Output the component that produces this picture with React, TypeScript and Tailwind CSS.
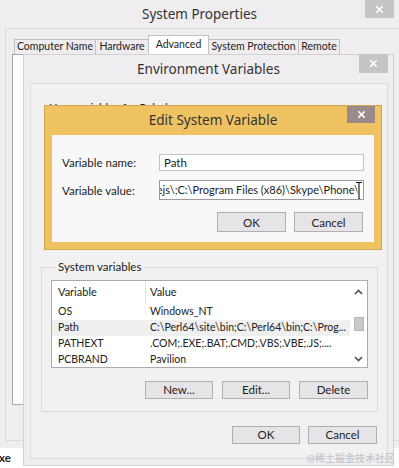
import React from 'react';

// little white "x" used on the caption buttons
const CloseX = () => (
  <svg width="9" height="9" viewBox="0 0 10 10">
    <path d="M1.5 1.5L8.5 8.5M8.5 1.5L1.5 8.5" stroke="white" strokeWidth="1.7" />
  </svg>
);

const Chevron = ({ up }: { up?: boolean }) => (
  <svg width="9" height="6" viewBox="0 0 9 6">
    <path d={up ? 'M1 5L4.5 1.5L8 5' : 'M1 1L4.5 4.5L8 1'} stroke="#505050" strokeWidth="1.6" fill="none" />
  </svg>
);

const IBeam = () => (
  <svg width="8" height="20" viewBox="0 0 8 20">
    <path d="M1 1.5h2.2L4 2.3L4.8 1.5H7M4 2.3V17.7M1 18.5h2.2L4 17.7L4.8 18.5H7" stroke="white" strokeWidth="3" fill="none" />
    <path d="M1 1.5h2.2L4 2.3L4.8 1.5H7M4 2.3V17.7M1 18.5h2.2L4 17.7L4.8 18.5H7" stroke="#111" strokeWidth="1.1" fill="none" />
  </svg>
);

function WinButton({ label, className = '' }: { label: string; className?: string }) {
  return (
    <div className={`flex items-center justify-center border border-[#b1afb1] bg-[#e6e4e6] text-[11.5px] text-[#222] ${className}`}>
      {label}
    </div>
  );
}

const tabs = [
  { label: 'Computer Name', cls: 'w-[82px] h-[15px] bg-[#eeecee]' },
  { label: 'Hardware', cls: 'w-[54px] h-[15px] bg-[#eeecee]' },
  { label: 'Advanced', cls: 'w-[61px] h-[19px] bg-white' },
  { label: 'System Protection', cls: 'w-[91px] h-[15px] bg-[#eeecee]' },
  { label: 'Remote', cls: 'w-[42px] h-[15px] bg-[#eeecee]' },
];

const rows = [
  ['OS', 'Windows_NT'],
  ['Path', 'C:\\Perl64\\site\\bin;C:\\Perl64\\bin;C:\\Prog...'],
  ['PATHEXT', '.COM;.EXE;.BAT;.CMD;.VBS;.VBE;.JS;....'],
  ['PCBRAND', 'Pavilion'],
];

export default function App() {
  return (
    <div className="relative w-[399px] h-[468px] overflow-hidden bg-white text-[#1e1e1e] font-['Lato','Noto_Sans_CJK_SC',sans-serif]">
      {/* System Properties (back window) */}
      <div className="h-[448px] bg-[#efedef] flex flex-col">
        <div className="relative h-[28px] flex items-center justify-center font-['Noto_Sans',sans-serif] text-[13.5px] text-[#333]">
          System Properties
          <div className="absolute right-[5px] top-0 w-[29px] h-[18px] bg-[#c6c4c6] flex items-center justify-center">
            <CloseX />
          </div>
        </div>
        <div className="ml-[5px] h-[413px] border-l border-t border-b border-[#dddbdd]">
          <div className="flex items-end pl-[8px] pt-[6px]">
            {tabs.map((t) => (
              <div
                key={t.label}
                className={`flex items-center justify-center whitespace-nowrap border border-b-0 border-[#c3c1c3] -ml-px first:ml-0 text-[10.5px] text-[#222] ${t.cls}`}
              >
                {t.label}
              </div>
            ))}
          </div>
          <div className="ml-[6px] w-[360px] h-[351px] bg-[#fcfcfc] border border-[#a9a7a9]" />
        </div>
      </div>
      <div className="pt-[1px] text-[11.5px] font-bold -ml-[1px] text-[#222]">xe</div>

      {/* Environment Variables */}
      <div className="absolute left-[23px] top-[54px] w-[371px] h-[412px] bg-[#efedef] border border-[#d3d1d3] flex flex-col">
        <div className="relative h-[28px] shrink-0 flex items-center justify-center font-['Noto_Sans',sans-serif] text-[13.5px] text-[#333]">
          Environment Variables
          <div className="absolute right-[5px] -top-px w-[29px] h-[19px] bg-[#c6c4c6] flex items-center justify-center">
            <CloseX />
          </div>
        </div>
        <div className="ml-[6px] mr-[5px] h-[376px] border border-[#dedcde] bg-[#f2f1f2] flex flex-col">
          <div className="h-[177px] pl-[18px] pt-[15px] text-[11.5px] text-[#222]">User variables for Rahul</div>

          <fieldset className="ml-[10px] mr-[9px] border border-[#dcdadc] px-[9px] pb-[12px]">
            <legend className="ml-[5px] px-[2px] text-[11.5px] leading-[12px] text-[#222]">System variables</legend>
            <div className="mt-[7px] h-[88px] border border-[#acaaac] bg-white flex overflow-hidden">
              <div className="flex-1 flex flex-col text-[10.5px] text-[#222]">
                <div className="h-[23px] shrink-0 flex text-[11px]">
                  <div className="w-[94px] pl-[6px] flex items-center border-r border-[#e3e3e3]">Variable</div>
                  <div className="pl-[4px] flex items-center">Value</div>
                </div>
                {rows.map(([k, v]) => (
                  <div key={k} className={`h-[16px] shrink-0 flex items-center whitespace-nowrap ${k === 'Path' ? 'bg-[#efefef]' : ''}`}>
                    <div className="w-[94px] pl-[6px]">{k}</div>
                    <div className="pl-[4px]">{v}</div>
                  </div>
                ))}
              </div>
              <div className="w-[17px] shrink-0 flex flex-col items-center">
                <div className="h-[22px] flex items-center">
                  <Chevron up />
                </div>
                <div className="mt-[14px] w-[10px] h-[14px] bg-[#c9c9c9] border border-[#b5b5b5]" />
                <div className="mt-auto mb-[5px]">
                  <Chevron />
                </div>
              </div>
            </div>
            <div className="mt-[13px] flex justify-end gap-[9px]">
              <WinButton label="New..." className="w-[68px] h-[18px]" />
              <WinButton label="Edit..." className="w-[68px] h-[18px]" />
              <WinButton label="Delete" className="w-[69px] h-[18px]" />
            </div>
          </fieldset>

          <div className="mt-[14px] mr-[10px] flex justify-end gap-[8px]">
            <WinButton label="OK" className="w-[68px] h-[18px]" />
            <WinButton label="Cancel" className="w-[69px] h-[18px]" />
          </div>
        </div>
      </div>

      {/* Edit System Variable (front dialog) */}
      <div className="absolute left-[44px] top-[105px] w-[338px] h-[145px] bg-[#efc262] border border-[#d3a74c] flex flex-col">
        <div className="relative h-[29px] shrink-0 flex items-center justify-center font-['Noto_Sans',sans-serif] text-[13.5px] text-[#333]">
          Edit System Variable
          <div className="absolute right-[6px] top-0 w-[28px] h-[17px] bg-[#9a8a88] flex items-center justify-center">
            <CloseX />
          </div>
        </div>
        <div className="mx-[7px] h-[107px] bg-[#f9f8f9] flex flex-col">
          <div className="mt-[19px] pl-[10px] grid grid-cols-[97px_205px] gap-y-[9px] items-center text-[11.5px] text-[#222]">
            <div>Variable name:</div>
            <div className="h-[17px] border border-[#c4c2c4] bg-white pl-[4px] flex items-center">Path</div>
            <div>Variable value:</div>
            <div className="relative h-[20px] border border-[#9c9a9c] bg-white flex items-center justify-end overflow-hidden pr-[4px] text-[11px]">
              <span className="whitespace-nowrap">nodejs\;C:\Program Files (x86)\Skype\Phone\</span>
              <div className="absolute right-0 top-0">
                <IBeam />
              </div>
            </div>
          </div>
          <div className="mt-[12px] pr-[11px] flex justify-end gap-[8px]">
            <WinButton label="OK" className="w-[69px] h-[20px]" />
            <WinButton label="Cancel" className="w-[69px] h-[20px]" />
          </div>
        </div>
      </div>

      <div className="absolute right-[4px] bottom-[2px] text-[10px] text-[#c2c0c2]">@稀土掘金技术社区</div>
    </div>
  );
}
